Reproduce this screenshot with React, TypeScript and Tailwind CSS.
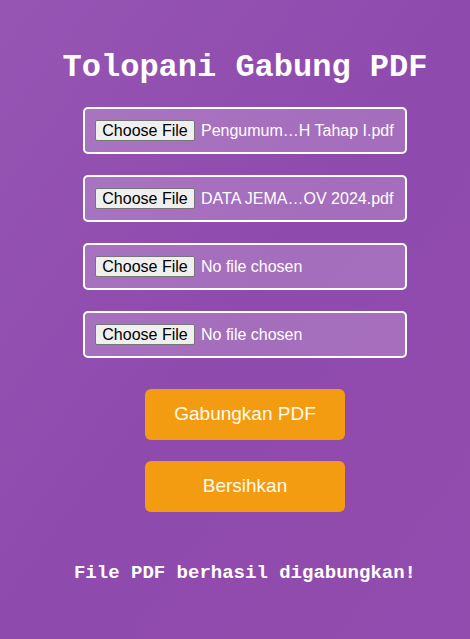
export default function App() {
  const files = [
    'Pengumum…H Tahap I.pdf',
    'DATA JEMA…OV 2024.pdf',
    'No file chosen',
    'No file chosen',
  ];

  return (
    <div className="min-h-[639px] w-full bg-gradient-to-br from-[#9655b3] via-[#8f4aad] to-[#924cae] pl-5 pt-[48px] flex flex-col items-center font-['Liberation_Sans',Arial,sans-serif]">
      {/* Title */}
      <h1 className="font-['Liberation_Mono','Courier_New',monospace] font-bold text-[32px] leading-[40px] text-white">
        Tolopani Gabung PDF
      </h1>

      {/* File inputs */}
      <div className="mt-[19px] flex flex-col gap-[21px]">
        {files.map((name, i) => (
          <div
            key={i}
            className="w-[324px] h-[47px] border-2 border-white rounded-[5px] bg-white/20 px-[10px] flex items-center"
          >
            <span className="h-[21px] w-[100px] flex items-center justify-center bg-[#efefef] border border-[#767676] rounded-[2px] text-[16px] text-black leading-none">
              Choose File
            </span>
            <span className="ml-[6px] text-[16px] text-white whitespace-nowrap">{name}</span>
          </div>
        ))}
      </div>

      {/* Buttons */}
      <div className="mt-[31px] flex flex-col gap-[21px]">
        <button className="w-[200px] h-[51px] rounded-[6px] bg-[#f39c12] text-[19px] text-[#fffbea]">
          Gabungkan PDF
        </button>
        <button className="w-[200px] h-[51px] rounded-[6px] bg-[#f39c12] text-[19px] text-[#fffbea]">
          Bersihkan
        </button>
      </div>

      {/* Status */}
      <p className="mt-[49px] font-['Liberation_Mono','Courier_New',monospace] font-bold text-[19px] leading-[24px] text-white">
        File PDF berhasil digabungkan!
      </p>
    </div>
  );
}
